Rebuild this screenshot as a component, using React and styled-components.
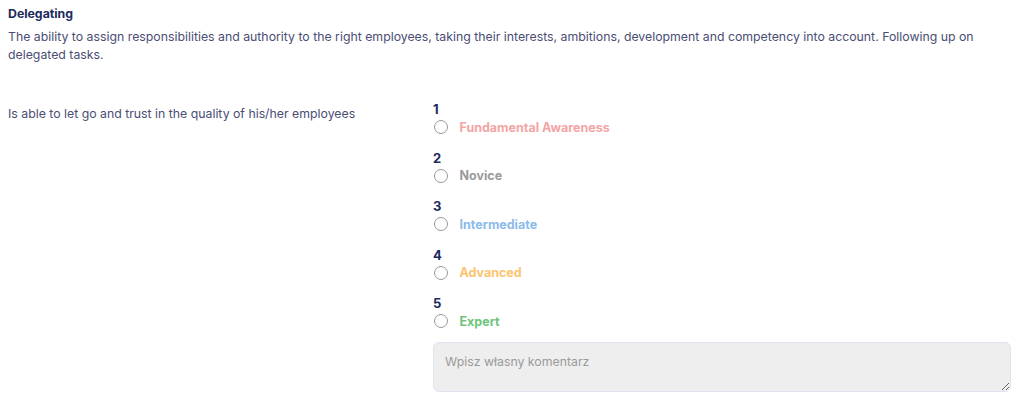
import { createGlobalStyle, styled } from 'styled-components'

const GlobalStyle = createGlobalStyle`
  body {
    margin: 0;
    background: #fff;
    font-family: Inter, 'Noto Sans', sans-serif;
  }
`

const Page = styled.div`
  padding: 5px 13px 0 8px;
`

const Title = styled.h3`
  margin: 0;
  font-size: 12.3px;
  line-height: 18px;
  font-weight: 700;
  color: #1d2a5c;
`

const Description = styled.p`
  margin: 5px 0 0;
  font-size: 12.3px;
  line-height: 18px;
  color: #4a4e74;
`

const QuestionRow = styled.div`
  display: grid;
  grid-template-columns: 425px 1fr;
  margin-top: 37px;
`

const Question = styled.div`
  font-size: 12.3px;
  line-height: 18px;
  color: #4a4e74;
  padding-top: 4px;
`

const Options = styled.div`
  display: flex;
  flex-direction: column;
  gap: 12.5px;
`

const Option = styled.label`
  display: flex;
  flex-direction: column;
  cursor: pointer;
`

const Level = styled.span`
  font-size: 13px;
  line-height: 16px;
  font-weight: 700;
  color: #1d2a5c;
`

const RadioLine = styled.span`
  display: flex;
  align-items: center;
  gap: 12px;
  height: 20px;
`

const Radio = styled.span`
  width: 12px;
  height: 12px;
  border: 1.5px solid #9a9a9a;
  border-radius: 50%;
  margin-left: 0.5px;
`

const LevelName = styled.span`
  font-size: 12.5px;
  font-weight: 700;
  color: ${p => p.$color};
`

const Comment = styled.textarea`
  margin-top: 11px;
  height: 50px;
  box-sizing: border-box;
  width: 100%;
  resize: vertical;
  background: #eeeeee;
  border: 1px solid #dfe3ee;
  border-radius: 6px;
  padding: 11px 11px;
  font-family: Inter, 'Noto Sans', sans-serif;
  font-size: 12.3px;
  color: #555;
  outline: none;
  display: block;

  &::placeholder {
    color: #9a9a9a;
  }
`

const levels = [
  { n: 1, name: 'Fundamental Awareness', color: '#f3a5a5' },
  { n: 2, name: 'Novice', color: '#9a9a9a' },
  { n: 3, name: 'Intermediate', color: '#8cbbea' },
  { n: 4, name: 'Advanced', color: '#fcc46e' },
  { n: 5, name: 'Expert', color: '#6fc47a' },
]

const App = () => {
  return (
    <Page>
      <GlobalStyle />
      <Title>Delegating</Title>
      <Description>
        The ability to assign responsibilities and authority to the right employees, taking their interests, ambitions, development and competency into account. Following up on delegated tasks.
      </Description>
      <QuestionRow>
        <Question>Is able to let go and trust in the quality of his/her employees</Question>
        <div>
          <Options>
            {levels.map(l => (
              <Option key={l.n}>
                <Level>{l.n}</Level>
                <RadioLine>
                  <Radio />
                  <LevelName $color={l.color}>{l.name}</LevelName>
                </RadioLine>
              </Option>
            ))}
          </Options>
          <Comment placeholder="Wpisz własny komentarz" />
        </div>
      </QuestionRow>
    </Page>
  )
}

export default App
